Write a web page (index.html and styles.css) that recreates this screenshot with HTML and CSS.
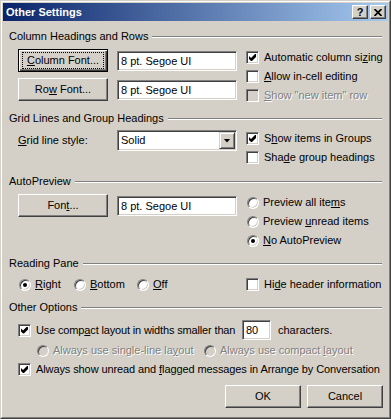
FILE: index.html
```html
<!DOCTYPE html>
<html>
  <head>
    <meta charset="utf-8" />
    <title>Other Settings</title>
    <link rel="stylesheet" href="styles.css">
  </head>
  <body>
    <div class="window">
      <div class="frame">

        <!-- Title bar with help and close buttons -->
        <div class="titlebar">
          <span class="title">Other Settings</span>
          <div class="caption-btns">
            <span class="cbtn">?</span>
            <span class="cbtn">
              <svg width="8" height="7" viewBox="0 0 8 7"><path d="M0.5 0 L7.5 7 M7.5 0 L0.5 7" stroke="#000" stroke-width="1.7" fill="none"/></svg>
            </span>
          </div>
        </div>

        <div class="client">

          <!-- Column Headings and Rows -->
          <div class="group g1">
            <div class="group-head"><span>Column Headings and Rows</span><span class="rule"></span></div>
            <div class="group-body">
              <div class="col-left">
                <div class="font-row">
                  <div class="btn default"><span class="focus"><span><u>C</u>olumn Font...</span></span></div>
                  <div class="field">8 pt. Segoe UI</div>
                </div>
                <div class="font-row">
                  <div class="btn"><span>Ro<u>w</u> Font...</span></div>
                  <div class="field">8 pt. Segoe UI</div>
                </div>
              </div>
              <div class="col-right">
                <div class="opt"><span class="check on"></span><span>Automatic column si<u>z</u>ing</span></div>
                <div class="opt"><span class="check"></span><span><u>A</u>llow in-cell editing</span></div>
                <div class="opt disabled"><span class="check"></span><span><u>S</u>how "new item" row</span></div>
              </div>
            </div>
          </div>

          <!-- Grid Lines and Group Headings -->
          <div class="group g2">
            <div class="group-head"><span>Grid Lines and Group Headings</span><span class="rule"></span></div>
            <div class="group-body">
              <div class="col-left">
                <div class="select-row">
                  <span><u>G</u>rid line style:</span>
                  <div class="select">
                    <span class="select-text">Solid</span>
                    <span class="drop"><span class="arrow"></span></span>
                  </div>
                </div>
              </div>
              <div class="col-right">
                <div class="opt"><span class="check on"></span><span>S<u>h</u>ow items in Groups</span></div>
                <div class="opt"><span class="check"></span><span>Sha<u>d</u>e group headings</span></div>
              </div>
            </div>
          </div>

          <!-- AutoPreview -->
          <div class="group g3">
            <div class="group-head"><span>AutoPreview</span><span class="rule"></span></div>
            <div class="group-body">
              <div class="col-left">
                <div class="font-row">
                  <div class="btn"><span>Fon<u>t</u>...</span></div>
                  <div class="field">8 pt. Segoe UI</div>
                </div>
              </div>
              <div class="col-right">
                <div class="opt ropt"><span class="radio"></span><span>Preview all ite<u>m</u>s</span></div>
                <div class="opt ropt"><span class="radio"></span><span>Preview <u>u</u>nread items</span></div>
                <div class="opt ropt"><span class="radio on"></span><span><u>N</u>o AutoPreview</span></div>
              </div>
            </div>
          </div>

          <!-- Reading Pane -->
          <div class="group g4">
            <div class="group-head"><span>Reading Pane</span><span class="rule"></span></div>
            <div class="group-body">
              <div class="pane-left">
                <div class="opt ropt pane-right"><span class="radio on"></span><span><u>R</u>ight</span></div>
                <div class="opt ropt pane-bottom"><span class="radio"></span><span><u>B</u>ottom</span></div>
                <div class="opt ropt"><span class="radio"></span><span><u>O</u>ff</span></div>
              </div>
              <div class="opt"><span class="check"></span><span>Hi<u>d</u>e header information</span></div>
            </div>
          </div>

          <!-- Other Options -->
          <div class="group g5">
            <div class="group-head"><span>Other Options</span><span class="rule"></span></div>
            <div class="group-body stack">
              <div class="compact-row">
                <span class="check on"></span>
                <span class="compact-text">Use comp<u>a</u>ct layout in widths smaller than</span>
                <span class="field small">80</span>
                <span class="chars">characters.</span>
              </div>
              <div class="sub-row disabled">
                <div class="opt ropt single"><span class="radio"></span><span>Always use single-line la<u>y</u>out</span></div>
                <div class="opt ropt"><span class="radio"></span><span>Always use compact <u>l</u>ayout</span></div>
              </div>
              <div class="opt always"><span class="check on"></span><span>Always show unread and <u>f</u>lagged messages in Arrange by Conversation</span></div>
              <div class="buttons">
                <div class="btn wide">OK</div>
                <div class="btn wide">Cancel</div>
              </div>
            </div>
          </div>

        </div>
      </div>
    </div>
  </body>
</html>
```

FILE: styles.css
```css
/* Classic dialog look */
* {
  box-sizing: border-box;
}

body {
  margin: 0;
  font-family: "Liberation Sans", Arial, sans-serif;
  font-size: 11px;
  line-height: 13px;
  color: #000;
  background: #d4d0c8;
}

u {
  text-decoration: underline;
  text-underline-offset: 1px;
}

/* Window frame */
.window {
  width: 391px;
  height: 419px;
  border: 1px solid;
  border-color: #d4d0c8 #404040 #404040 #d4d0c8;
  background: #d4d0c8;
}

.frame {
  height: 100%;
  border: 1px solid;
  border-color: #fff #808080 #808080 #fff;
  padding: 1px;
  display: flex;
  flex-direction: column;
}

/* Title bar */
.titlebar {
  height: 18px;
  flex: none;
  display: flex;
  align-items: center;
  padding: 0 2px 0 3px;
  background: linear-gradient(to right, #0a246a, #a6caf0);
  color: #fff;
  font-weight: bold;
}

.caption-btns {
  margin-left: auto;
  display: flex;
  gap: 2px;
}

.cbtn {
  width: 16px;
  height: 14px;
  display: flex;
  align-items: center;
  justify-content: center;
  color: #000;
  font-weight: bold;
  font-size: 11px;
  background: #d4d0c8;
  border: 1px solid;
  border-color: #fff #404040 #404040 #fff;
  box-shadow: inset -1px -1px 0 #808080;
}

/* Client area */
.client {
  flex: 1;
  padding: 9px 6px 0 15px;
}

.group-head {
  display: flex;
  align-items: center;
  height: 13px;
  margin-left: -9px;
  white-space: nowrap;
}

.rule {
  flex: 1;
  height: 2px;
  margin-left: 4px;
  border-top: 1px solid #808080;
  border-bottom: 1px solid #fff;
}

.group-body {
  display: flex;
  margin-top: 6px;
}

.g1 { margin-bottom: 10px; }
.g2 { margin-bottom: 11px; }
.g3 { margin-bottom: 10px; }
.g4 { margin-bottom: 10px; }

.g2 .group-body { margin-top: 5px; }
.g4 .group-body { margin-top: 8px; }

.col-left {
  width: 219px;
  margin-right: 9px;
  display: flex;
  flex-direction: column;
  gap: 6px;
}

.col-right {
  display: flex;
  flex-direction: column;
  gap: 6px;
  padding-top: 2px;
}

.font-row {
  display: flex;
  align-items: center;
  gap: 9px;
}

/* Raised push buttons */
.btn {
  width: 90px;
  height: 23px;
  flex: none;
  display: flex;
  align-items: center;
  justify-content: center;
  background: #d4d0c8;
  border: 1px solid;
  border-color: #fff #404040 #404040 #fff;
  box-shadow: inset -1px -1px 0 #808080, inset 1px 1px 0 #d4d0c8;
  white-space: nowrap;
}

.btn.default {
  border-color: #000;
  box-shadow: inset 1px 1px 0 #fff, inset -1px -1px 0 #404040, inset -2px -2px 0 #808080;
  padding: 2px 3px;
  align-items: stretch;
}

.focus {
  flex: 1;
  display: flex;
  align-items: center;
  justify-content: center;
  border: 1px dotted #000;
}

.btn.wide {
  width: 76px;
}

/* Sunken fields */
.field,
.select,
.check,
.radio {
  border: 1px solid;
  border-color: #808080 #fff #fff #808080;
  box-shadow: inset 1px 1px 0 #404040, inset -1px -1px 0 #d4d0c8;
}

.field {
  width: 120px;
  height: 20px;
  padding: 0 3px;
  line-height: 18px;
  background: #fff;
  white-space: nowrap;
}

.field.small {
  width: 29px;
  margin-left: 5px;
}

.select-row {
  display: flex;
  align-items: center;
  justify-content: space-between;
}

.select {
  width: 120px;
  height: 21px;
  display: flex;
  align-items: center;
  padding: 1px;
  background: #fff;
}

.select-text {
  flex: 1;
  padding-left: 2px;
}

.drop {
  width: 16px;
  height: 17px;
  display: flex;
  align-items: center;
  justify-content: center;
  background: #d4d0c8;
  border: 1px solid;
  border-color: #d4d0c8 #404040 #404040 #d4d0c8;
  box-shadow: inset 1px 1px 0 #fff, inset -1px -1px 0 #808080;
}

.arrow {
  width: 7px;
  height: 4px;
  background: #000;
  clip-path: polygon(0 0, 7px 0, 3.5px 4px);
}

/* Checkboxes and radio buttons */
.opt {
  display: flex;
  align-items: center;
  gap: 5px;
  height: 13px;
  white-space: nowrap;
}

.ropt {
  gap: 4px;
}

.check {
  width: 13px;
  height: 13px;
  flex: none;
  display: flex;
  align-items: center;
  justify-content: center;
  background: #fff;
}

.check.on::after {
  content: "";
  width: 7px;
  height: 7px;
  background: #000;
  clip-path: polygon(0 2px, 2px 4px, 6px 0, 7px 0, 7px 3px, 3px 7px, 2px 7px, 0 5px);
}

.radio {
  width: 12px;
  height: 12px;
  flex: none;
  margin-left: 1px;
  border-radius: 50%;
  display: flex;
  align-items: center;
  justify-content: center;
  background: #fff;
}

.radio.on::after {
  content: "";
  width: 4px;
  height: 4px;
  border-radius: 50%;
  background: #000;
}

.disabled {
  color: #808080;
  text-shadow: 1px 1px 0 #fff;
}

.disabled .check,
.disabled .radio {
  background: #d4d0c8;
}

/* Reading pane row */
.pane-left {
  width: 228px;
  display: flex;
}

.pane-right { width: 55px; }
.pane-bottom { width: 63px; }

/* Other options */
.stack {
  flex-direction: column;
}

.compact-row {
  display: flex;
  align-items: center;
  height: 20px;
  white-space: nowrap;
}

.compact-text {
  width: 206px;
  padding-left: 5px;
  letter-spacing: -0.15px;
}

.chars {
  margin-left: 7px;
}

.sub-row {
  display: flex;
  margin-top: 4px;
  padding-left: 18px;
}

.single {
  width: 167px;
}

.always {
  margin-top: 6px;
  letter-spacing: -0.1px;
}

.buttons {
  display: flex;
  justify-content: flex-end;
  gap: 6px;
  margin-top: 9px;
  margin-right: -1px;
}
```
